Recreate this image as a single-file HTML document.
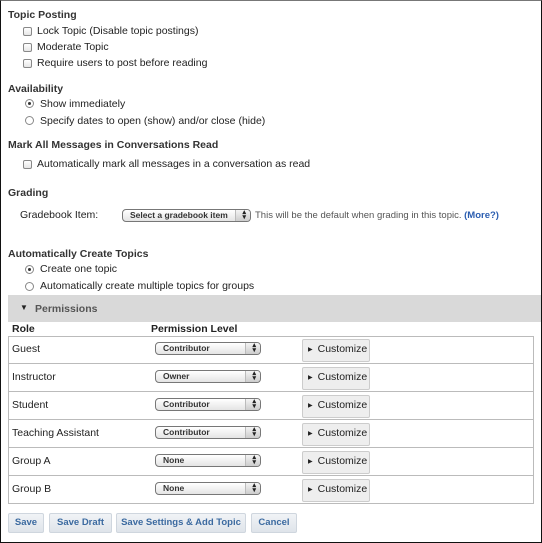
<!DOCTYPE html>
<html><head><style>
*{margin:0;padding:0;box-sizing:border-box}
body{width:542px;height:543px;background:#fff;font-family:"Liberation Sans",Arial,sans-serif;font-size:10.5px;color:#222;position:relative;overflow:hidden}
#frame{position:absolute;left:0;top:0;width:542px;height:543px;border:1.5px solid #111;border-top:1px solid #777}
.a{position:absolute;white-space:nowrap}
.h{font-weight:bold;color:#333}
.cb{position:absolute;width:9px;height:9px;border:1px solid #888;border-radius:2px;background:linear-gradient(#fff,#e6e6e6)}
.rd{position:absolute;width:9px;height:9px;border:1px solid #888;border-radius:50%;background:#fff}
.rd.on::after{content:"";position:absolute;left:2px;top:2px;width:3px;height:3px;border-radius:50%;background:#333}
.sel{position:absolute;height:13px;border:1px solid #777;border-radius:4px;background:linear-gradient(#fff,#e4e4e4);font-size:8.5px;font-weight:bold;padding-left:7px;line-height:11px;color:#333;overflow:hidden}
.sel::after{content:"";position:absolute;right:0;top:0;width:14px;height:11px;border-left:1px solid #bbb;background:linear-gradient(#f4f4f4,#ccc)}
.sel i{position:absolute;right:4px;top:0;font-style:normal;font-size:7px;line-height:5px;z-index:2;color:#222}
.cz{position:absolute;width:68px;height:23px;border:1px solid #ccc;border-radius:2px;background:#eee;font-size:10.5px;line-height:18px;padding-left:5px}
.cz b{font-size:6px;font-weight:normal;margin-right:5px;vertical-align:1px}
.row{position:absolute;left:8px;width:526px;height:28px;border:1px solid #bbb;border-top:none}
.bt{position:absolute;top:513px;height:20px;border:1px solid #cfd6de;border-radius:2px;background:linear-gradient(#f1f3f6,#dfe4ea);color:#3b6aa0;font-weight:bold;font-size:9.5px;line-height:18px;text-align:center}
</style></head><body>
<div class="a h" style="left:8px;top:9px">Topic Posting</div>
<div class="cb" style="left:23px;top:27px"></div><div class="a" style="left:37px;top:25px">Lock Topic (Disable topic postings)</div>
<div class="cb" style="left:23px;top:43px"></div><div class="a" style="left:37px;top:41px">Moderate Topic</div>
<div class="cb" style="left:23px;top:59px"></div><div class="a" style="left:37px;top:57px">Require users to post before reading</div>
<div class="a h" style="left:8px;top:83px">Availability</div>
<div class="rd on" style="left:25px;top:99px"></div><div class="a" style="left:40px;top:98px">Show immediately</div>
<div class="rd" style="left:25px;top:116px"></div><div class="a" style="left:40px;top:115px">Specify dates to open (show) and/or close (hide)</div>
<div class="a h" style="left:8px;top:139px">Mark All Messages in Conversations Read</div>
<div class="cb" style="left:23px;top:160px"></div><div class="a" style="left:37px;top:158px">Automatically mark all messages in a conversation as read</div>
<div class="a h" style="left:8px;top:187px">Grading</div>
<div class="a" style="left:20px;top:209px">Gradebook Item:</div>
<div class="sel" style="left:122px;top:209px;width:129px">Select a gradebook item<i>▴<br>▾</i></div>
<div class="a" style="left:255px;top:210px;font-size:9.5px;color:#555">This will be the default when grading in this topic. <span style="color:#2a5db0;font-weight:bold">(More?)</span></div>
<div class="a h" style="left:8px;top:248px">Automatically Create Topics</div>
<div class="rd on" style="left:25px;top:265px"></div><div class="a" style="left:40px;top:263px">Create one topic</div>
<div class="rd" style="left:25px;top:282px"></div><div class="a" style="left:40px;top:280px">Automatically create multiple topics for groups</div>
<div class="a" style="left:8px;top:295px;width:534px;height:27px;background:#d9d9d9"></div>
<div class="a" style="left:20px;top:303px;font-size:8px">▼</div>
<div class="a h" style="left:35px;top:303px;color:#555">Permissions</div>
<div class="a h" style="left:12px;top:323px;color:#222">Role</div>
<div class="a h" style="left:151px;top:323px;color:#222">Permission Level</div>
<div class="a" style="left:8px;top:336px;width:526px;border-top:1px solid #bbb"></div>
<div class="row" style="top:336px"></div><div class="a" style="left:12px;top:343px">Guest</div><div class="sel" style="left:155px;top:342px;width:106px">Contributor<i>▴<br>▾</i></div><div class="cz" style="left:302px;top:339px"><b>▶</b>Customize</div>
<div class="row" style="top:364px"></div><div class="a" style="left:12px;top:371px">Instructor</div><div class="sel" style="left:155px;top:370px;width:106px">Owner<i>▴<br>▾</i></div><div class="cz" style="left:302px;top:367px"><b>▶</b>Customize</div>
<div class="row" style="top:392px"></div><div class="a" style="left:12px;top:399px">Student</div><div class="sel" style="left:155px;top:398px;width:106px">Contributor<i>▴<br>▾</i></div><div class="cz" style="left:302px;top:395px"><b>▶</b>Customize</div>
<div class="row" style="top:420px"></div><div class="a" style="left:12px;top:427px">Teaching Assistant</div><div class="sel" style="left:155px;top:426px;width:106px">Contributor<i>▴<br>▾</i></div><div class="cz" style="left:302px;top:423px"><b>▶</b>Customize</div>
<div class="row" style="top:448px"></div><div class="a" style="left:12px;top:455px">Group A</div><div class="sel" style="left:155px;top:454px;width:106px">None<i>▴<br>▾</i></div><div class="cz" style="left:302px;top:451px"><b>▶</b>Customize</div>
<div class="row" style="top:476px"></div><div class="a" style="left:12px;top:483px">Group B</div><div class="sel" style="left:155px;top:482px;width:106px">None<i>▴<br>▾</i></div><div class="cz" style="left:302px;top:479px"><b>▶</b>Customize</div>
<div class="bt" style="left:8px;width:36px">Save</div>
<div class="bt" style="left:49px;width:63px">Save Draft</div>
<div class="bt" style="left:116px;width:130px">Save Settings &amp; Add Topic</div>
<div class="bt" style="left:251px;width:46px">Cancel</div>
<div id="frame"></div>
</body></html>
